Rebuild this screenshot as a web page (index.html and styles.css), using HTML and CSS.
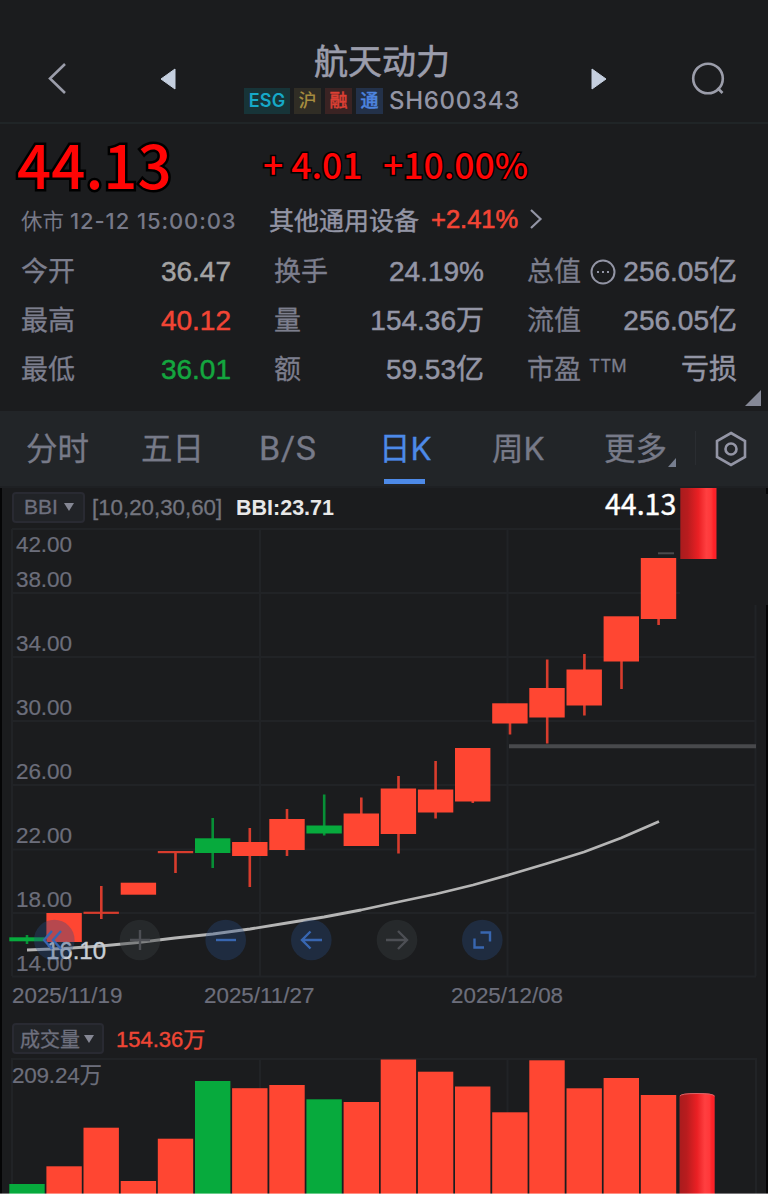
FILE: index.html
```html
<!DOCTYPE html>
<html lang="zh-CN">
<head>
    <meta charset="UTF-8">
    <meta name="viewport" content="width=device-width, initial-scale=1.0">
    <title>航天动力 SH600343</title>
    <link rel="stylesheet" href="styles.css">
</head>
<body>
    <header>
        <svg class="back" width="22" height="34" viewBox="0 0 22 34"><path d="M18 3L3 17.5L18 32"/></svg>
        <svg class="prev" width="16" height="22" viewBox="0 0 16 22"><path d="M15 1V21L1 11Z"/></svg>
        <div class="title">
            <h1>航天动力</h1>
            <div class="tags">
                <span class="tag esg">ESG</span>
                <span class="tag hu">沪</span>
                <span class="tag rong">融</span>
                <span class="tag tong">通</span>
                <span class="code">SH600343</span>
            </div>
        </div>
        <svg class="next" width="16" height="22" viewBox="0 0 16 22"><path d="M1 1V21L15 11Z"/></svg>
        <svg class="search" width="34" height="34" viewBox="0 0 34 34"><circle cx="17" cy="16.5" r="14.8"/><path d="M26.5 26L31.5 31"/></svg>
    </header>

    <section class="quote">
        <div class="price-row">
            <span class="price">44.13</span>
            <span class="change">+ 4.01</span>
            <span class="percent">+10.00%</span>
        </div>
        <div class="status-row">
            <span class="status">休市 <em>12-12 15:00:03</em></span>
            <span class="industry">其他通用设备</span>
            <span class="industry-change">+2.41%</span>
            <svg width="14" height="22" viewBox="0 0 14 22"><path d="M2 2L11.5 11L2 20"/></svg>
        </div>
        <div class="stats">
            <div class="stat"><span>今开</span><b class="flat">36.47</b></div>
            <div class="stat"><span>换手</span><b>24.19%</b></div>
            <div class="stat"><span>总值</span><svg width="26" height="26" viewBox="0 0 26 26"><circle cx="13" cy="13" r="11.5"/><path d="M7 13h2M12 13h2M17 13h2"/></svg><b>256.05亿</b></div>
            <div class="stat"><span>最高</span><b class="up">40.12</b></div>
            <div class="stat"><span>量</span><b>154.36万</b></div>
            <div class="stat"><span>流值</span><b>256.05亿</b></div>
            <div class="stat"><span>最低</span><b class="down">36.01</b></div>
            <div class="stat"><span>额</span><b>59.53亿</b></div>
            <div class="stat"><span>市盈</span><small>TTM</small><b>亏损</b></div>
        </div>
        <i class="corner"></i>
    </section>

    <nav>
        <a>分时</a>
        <a>五日</a>
        <a class="latin">B/S</a>
        <a class="active">日K</a>
        <a>周K</a>
        <a class="more">更多</a>
        <svg width="32" height="36" viewBox="0 0 32 36"><path d="M16 2L30 10V26L16 34L2 26V10Z"/><circle cx="16" cy="18" r="5.5"/></svg>
    </nav>

    <main>
        <div class="indicator">
            <span class="picker">BBI<i></i></span>
            <span class="params">[10,20,30,60]</span>
            <span class="bbi">BBI:23.71</span>
            <span class="last">44.13</span>
        </div>

        <svg class="kline" width="768" height="452" viewBox="0 528 768 452">
            <defs>
                <linearGradient id="tube">
                    <stop offset="0" stop-color="#a91c1e"/>
                    <stop offset="0.2" stop-color="#b81c1e"/>
                    <stop offset="0.5" stop-color="#ea2024"/>
                    <stop offset="0.72" stop-color="#ff3f40"/>
                    <stop offset="0.85" stop-color="#ff383a"/>
                    <stop offset="0.92" stop-color="#ff2228"/>
                    <stop offset="1" stop-color="#f62229"/>
                </linearGradient>
            </defs>
            <g class="grid">
                <path d="M12 529H680M12 593H680M12 657H755M12 721H755M12 785H755M12 849.5H755M12 913H755M12 976.5H756"/>
                <path d="M12 529V976M260 529V976M507.5 529V976M755.5 605V976"/>
            </g>
            <path class="edge" d="M767 605V1194M767 488V494"/>
            <g class="axis">
                <text x="16" y="552" textLength="56">42.00</text>
                <text x="16" y="587" textLength="56">38.00</text>
                <text x="16" y="651" textLength="56">34.00</text>
                <text x="16" y="715" textLength="56">30.00</text>
                <text x="16" y="779" textLength="56">26.00</text>
                <text x="16" y="843" textLength="56">22.00</text>
                <text x="16" y="907" textLength="56">18.00</text>
                <text x="16" y="971" textLength="56">14.00</text>
            </g>
            <path class="support" d="M509 746.3H756"/>
            <path class="high-mark" d="M658 553.3H674"/>
            <g class="up">
                <path d="M101.3 886V919M175.5 852V873M249.8 828V887M287 809V856M361.3 797.5V814M398.5 776V853.5M435.6 761V818.5M472.8 800V803M510 723V734.5M547.2 659.5V743.5M584.4 654V715.5M621.5 661V689M658.6 619V625"/>
                <rect x="46.4" y="913" width="35.4" height="29"/>
                <rect class="thin" x="83.5" y="911.7" width="35.4" height="2.2"/>
                <rect x="120.7" y="882.7" width="35.4" height="12"/>
                <rect class="thin" x="157.8" y="851" width="35.4" height="2.2"/>
                <rect x="232.1" y="842" width="35.4" height="14"/>
                <rect x="269.3" y="819" width="35.4" height="31"/>
                <rect x="343.6" y="813.5" width="35.4" height="32.5"/>
                <rect x="380.7" y="788.5" width="35.4" height="45.5"/>
                <rect x="417.9" y="789.5" width="35.4" height="23"/>
                <rect x="455" y="748" width="35.4" height="53.5"/>
                <rect x="492.2" y="703.3" width="35.4" height="20.2"/>
                <rect x="529.3" y="688" width="35.4" height="29.5"/>
                <rect x="566.5" y="669.5" width="35.4" height="36"/>
                <rect x="603.6" y="616.3" width="35.4" height="45.2"/>
                <rect x="640.8" y="558" width="35.4" height="61"/>
            </g>
            <g class="down">
                <path d="M27 935V944M212.7 818V868M324.2 794.5V835.5"/>
                <rect x="9.3" y="937.3" width="35.4" height="4"/>
                <rect x="195" y="838.3" width="35.4" height="14.7"/>
                <rect x="306.4" y="825.5" width="35.4" height="8"/>
            </g>
            <rect x="680.3" y="488" width="36.2" height="71" fill="url(#tube)"/>
            <polyline class="bbi-line" points="27,950 64,948.5 101,946 138,942.5 175,938 213,934 250,929 287,923 324,917 361,910 398,902 436,894 473,885 510,874.5 547,863.5 584,852 621,838 659,821.5"/>
            <text class="low" x="46" y="959" textLength="60">16.10</text>
            <g class="tools">
                <g class="on">
                    <circle cx="54.3" cy="940" r="20.3"/>
                    <path d="M52 931L44 940L52 949M61 931L53 940L61 949"/>
                    <circle cx="225.7" cy="940" r="20.3"/>
                    <path d="M216 940H236"/>
                    <circle cx="311.3" cy="940" r="20.3"/>
                    <path d="M322 940H302M310.5 931.5L302 940L310.5 948.5"/>
                    <circle cx="482.3" cy="940" r="20.3"/>
                    <path d="M480.5 932.5H490V941.5M474.5 938.5V947.5H484"/>
                </g>
                <g class="off">
                    <circle cx="140" cy="940" r="20.3"/>
                    <path d="M130 940H150M140 930V950"/>
                    <circle cx="397" cy="940" r="20.3"/>
                    <path d="M386 940H406.5M398 931L407 940L398 949"/>
                </g>
            </g>
        </svg>

        <div class="dates">
            <span>2025/11/19</span>
            <span>2025/11/27</span>
            <span>2025/12/08</span>
        </div>

        <div class="indicator volume-head">
            <span class="picker">成交量<i></i></span>
            <span class="volume-now">154.36万</span>
        </div>

        <svg class="volume" width="768" height="136" viewBox="0 1058 768 136">
            <path class="grid" d="M12 1194V1059H756V1194M260 1059V1194M507.5 1059V1194"/>
            <text class="axis" x="12" y="1083" textLength="90">209.24万</text>
            <g class="up">
                <rect x="46.4" y="1166.3" width="35.4" height="28"/>
                <rect x="83.5" y="1127.7" width="35.4" height="67"/>
                <rect x="120.7" y="1181" width="35.4" height="14"/>
                <rect x="157.8" y="1138.7" width="35.4" height="56"/>
                <rect x="232.1" y="1088.2" width="35.4" height="106"/>
                <rect x="269.3" y="1085" width="35.4" height="110"/>
                <rect x="343.6" y="1102" width="35.4" height="93"/>
                <rect x="380.7" y="1059.5" width="35.4" height="135"/>
                <rect x="417.9" y="1071.7" width="35.4" height="123"/>
                <rect x="455" y="1086.5" width="35.4" height="108"/>
                <rect x="492.2" y="1112.3" width="35.4" height="82"/>
                <rect x="529.3" y="1060.3" width="35.4" height="134"/>
                <rect x="566.5" y="1088.3" width="35.4" height="106"/>
                <rect x="603.6" y="1078" width="35.4" height="117"/>
                <rect x="640.8" y="1095" width="35.4" height="100"/>
            </g>
            <g class="down">
                <rect x="9.3" y="1184" width="35.4" height="11"/>
                <rect x="195" y="1081" width="35.4" height="114"/>
                <rect x="306.4" y="1099.3" width="35.4" height="95"/>
            </g>
            <path d="M679.5 1194V1096Q681 1093 697 1093Q713 1093 714.7 1096V1194Z" fill="url(#tube)"/>
            <path class="rim" d="M680 1096Q681 1093.5 697 1093.5Q713 1093.5 714.5 1096"/>
            <path class="bottom-line" d="M0 1193.5H768"/>
        </svg>
    </main>
</body>
</html>
```

FILE: styles.css
```css
* {
    box-sizing: border-box;
}

body {
    margin: 0;
    width: 768px;
    height: 1194px;
    overflow: hidden;
    background-color: #1b1c1e;
    color: #9395a5;
    font-family: Inter, "Noto Sans CJK SC", sans-serif;
}

svg {
    display: block;
    fill: none;
    flex: none;
}

/* header */
header {
    display: flex;
    height: 124px;
    padding-top: 40px;
    border-bottom: 2px solid #202527;
}

.back {
    margin: 21px 0 0 47px;
    stroke: #9b9daa;
    stroke-width: 2.6;
}

.prev,
.next {
    margin: 28px 0 0 91px;
    fill: #c5cfdf;
    stroke: #c5cfdf;
    stroke-linejoin: round;
}

.next {
    margin-left: 71px;
}

.search {
    margin: 22px 0 0 84px;
    stroke: #9b9daa;
    stroke-width: 2.6;
}

.title {
    width: 276px;
    margin-left: 68px;
}

h1 {
    margin: 0;
    color: #9b9dac;
    font-size: 34px;
    font-weight: 400;
    line-height: 44px;
    padding-left: 70px;
    -webkit-text-stroke: 0.6px #9b9dac;
}

.tags {
    display: flex;
    align-items: center;
    gap: 4px;
    margin-top: 4px;
    line-height: 26px;
}

.tag {
    width: 27px;
    height: 26px;
    font-size: 18px;
    font-weight: 500;
    text-align: center;
}

.esg {
    width: 46px;
    background-color: #173438;
    color: #16a9c8;
    font-weight: 600;
    letter-spacing: 0.2px;
}

.hu {
    background-color: #302d25;
    color: #a58c3f;
}

.rong {
    background-color: #3a2323;
    color: #dc4034;
    -webkit-text-stroke: 0.4px #dc4034;
}

.tong {
    background-color: #233149;
    color: #4d84df;
    -webkit-text-stroke: 0.4px #4d84df;
}

.code {
    margin-left: 2px;
    font-size: 24px;
    font-weight: 500;
    letter-spacing: 0.7px;
}

/* quote */
.quote {
    position: relative;
    height: 287px;
}

.price-row {
    display: flex;
    height: 77px;
    color: #ff0505;
    font-family: "Noto Sans CJK SC", sans-serif;
    font-size: 35.5px;
    font-weight: 500;
    line-height: 80px;
    -webkit-text-stroke: 3px #000;
    paint-order: stroke fill;
}

.price {
    width: 245px;
    padding-left: 17px;
    font-size: 60px;
    line-height: 77px;
    -webkit-text-stroke-width: 5px;
}

.change {
    width: 121px;
    padding-left: 18px;
}

.percent {
    padding-left: 17px;
}

.status-row {
    display: flex;
    align-items: center;
    height: 36px;
    padding-left: 21px;
    font-size: 25px;
}

.status {
    width: 248px;
    color: #777988;
    font-size: 21.5px;
    white-space: nowrap;
}

.status em {
    font-size: 22px;
    font-style: normal;
    font-weight: 500;
    letter-spacing: 0.9px;
}

.industry {
    -webkit-text-stroke: 0.4px #9395a5;
}

.industry-change {
    width: 98px;
    margin-left: 12px;
    color: #f24535;
    font-family: "Liberation Sans", sans-serif;
    font-size: 25.5px;
    -webkit-text-stroke: 0.6px #f24535;
}

.status-row svg {
    stroke: #9395a5;
    stroke-width: 2.2;
}

.stats {
    display: grid;
    grid-template-columns: 210px 210px 210px;
    grid-auto-rows: 49px;
    column-gap: 43px;
    padding: 10px 0 0 21px;
}

.stat {
    display: flex;
    align-items: center;
    color: #7c7e8d;
    font-size: 27px;
    line-height: 40px;
    white-space: nowrap;
    -webkit-text-stroke: 0.3px;
}

.stat b {
    margin-left: auto;
    color: #9395a5;
    font-family: "Liberation Sans", "Noto Sans CJK SC", sans-serif;
    font-size: 28px;
    font-weight: 400;
    -webkit-text-stroke: 0.5px;
}

.stat svg {
    margin-left: 9px;
    stroke: #9395a5;
    stroke-width: 2;
}

.stat small {
    margin: -8px 0 0 8px;
    font-size: 17px;
    letter-spacing: 0.2px;
}

.stat .flat {
    color: #a3a3a3;
}

.stat .up {
    color: #f24535;
}

.stat .down {
    color: #14a63f;
}

.corner {
    position: absolute;
    right: 7px;
    bottom: 5px;
    border-left: 16px solid transparent;
    border-bottom: 16px solid #858896;
}

/* period tabs */
nav {
    display: grid;
    grid-template-columns: 115px 118px 120px 113px 112px 90px 60px;
    align-items: center;
    height: 77px;
    padding-left: 26px;
    background-color: #222528;
    border-bottom: 2px solid #1e2023;
    color: #777a88;
    font-size: 31.5px;
    line-height: 75px;
    -webkit-text-stroke: 0.3px;
}

nav .latin {
    font-family: Roboto, sans-serif;
    font-size: 34px;
    letter-spacing: 0.8px;
}

nav .active {
    color: #4d8ae8;
    position: relative;
}

nav .active::after {
    content: "";
    position: absolute;
    left: 5px;
    bottom: 2px;
    width: 41px;
    height: 5px;
    background-color: #4d8ae8;
}

nav .more {
    position: relative;
}

nav .more::before {
    content: "";
    position: absolute;
    left: 91px;
    top: 20px;
    width: 1px;
    height: 34px;
    background-color: #2a2d31;
}

nav .more::after {
    content: "";
    position: absolute;
    left: 64px;
    bottom: 19px;
    border-left: 8px solid transparent;
    border-bottom: 9px solid #777f90;
}

nav svg {
    margin-left: 21px;
    stroke: #9395a5;
    stroke-width: 2.6;
}

/* charts */
main {
    height: 706px;
    border-left: 2px solid #050506;
    font-family: "Liberation Sans", "Noto Sans CJK SC", sans-serif;
}

main > svg {
    margin-left: -2px;
    overflow: visible;
}

.indicator {
    display: flex;
    align-items: center;
    height: 40px;
    padding-left: 10px;
    font-size: 22.3px;
}

.picker {
    display: flex;
    align-items: center;
    height: 31px;
    padding-left: 10px;
    width: 73px;
    border: 2px solid #292a32;
    border-radius: 4px;
    background-color: #212327;
    color: #6e707e;
    font-size: 21px;
    margin-top: -2px;
    -webkit-text-stroke: 0.3px;
}

.picker i {
    margin-left: 6px;
    border: 5px solid transparent;
    border-top: 8px solid #858794;
    border-bottom: 0;
}

.params {
    width: 144px;
    padding-left: 7px;
    color: #73757f;
    -webkit-text-stroke: 0.3px;
}

.bbi {
    color: #e8e8e8;
    font-weight: 700;
    font-size: 21.5px;
    width: 376px;
    padding-left: 7px;
}

.last {
    color: #fff;
    font-family: "Noto Sans CJK SC", sans-serif;
    font-size: 28.5px;
    line-height: 32px;
    margin-top: -10px;
    -webkit-text-stroke: 0.4px;
}

.grid {
    stroke: #212326;
    stroke-width: 2;
}

.edge {
    stroke: #050506;
    stroke-width: 2;
}

.axis {
    fill: #6c6e7b;
    font-size: 22.5px;
    stroke: #6c6e7b;
    stroke-width: 0.2;
}

svg .up {
    fill: #ff4632;
}

svg .down {
    fill: #07aa3d;
}

.up .thin {
    fill: #d83c2d;
}

.up path {
    stroke: #d83c2d;
    stroke-width: 2.6;
}

.down path {
    stroke: #078f36;
    stroke-width: 2.6;
}

.support {
    stroke: #48494c;
    stroke-width: 4;
}

.high-mark {
    stroke: #4a4b4d;
    stroke-width: 2;
}

.bbi-line {
    stroke: #b5b5b5;
    stroke-width: 2.8;
    stroke-linejoin: round;
}

.low {
    fill: #c8ced6;
    font-size: 24px;
    stroke: #c8ced6;
    stroke-width: 0.4;
}

.tools circle {
    stroke: none;
}

.tools .on {
    stroke: #3866b0;
    stroke-width: 2.4;
}

.on circle {
    fill: #2a4d83;
    fill-opacity: 0.34;
}

.tools .off {
    stroke: #4d4f54;
    stroke-width: 2.4;
}

.off circle {
    fill: #363b3f;
    fill-opacity: 0.42;
}

.dates {
    display: grid;
    grid-template-columns: 192px 247px 200px;
    height: 43px;
    padding-left: 10px;
    color: #6c6e7b;
    font-size: 22.4px;
    line-height: 32px;
    -webkit-text-stroke: 0.2px;
}

.volume-head {
    height: 35px;
    padding-bottom: 4px;
}

.volume-head .picker {
    width: 92px;
    padding-left: 6px;
    font-size: 20px;
    margin-top: 0;
}

.volume-head .picker i {
    margin-left: 4px;
}

.volume-now {
    margin: -4px 0 0 12px;
    color: #ee4635;
    font-size: 22px;
    -webkit-text-stroke: 0.4px #ee4635;
}

.rim {
    stroke: #d96468;
    stroke-width: 1;
}

.bottom-line {
    stroke: #fff;
    stroke-opacity: 0.4;
}
```
